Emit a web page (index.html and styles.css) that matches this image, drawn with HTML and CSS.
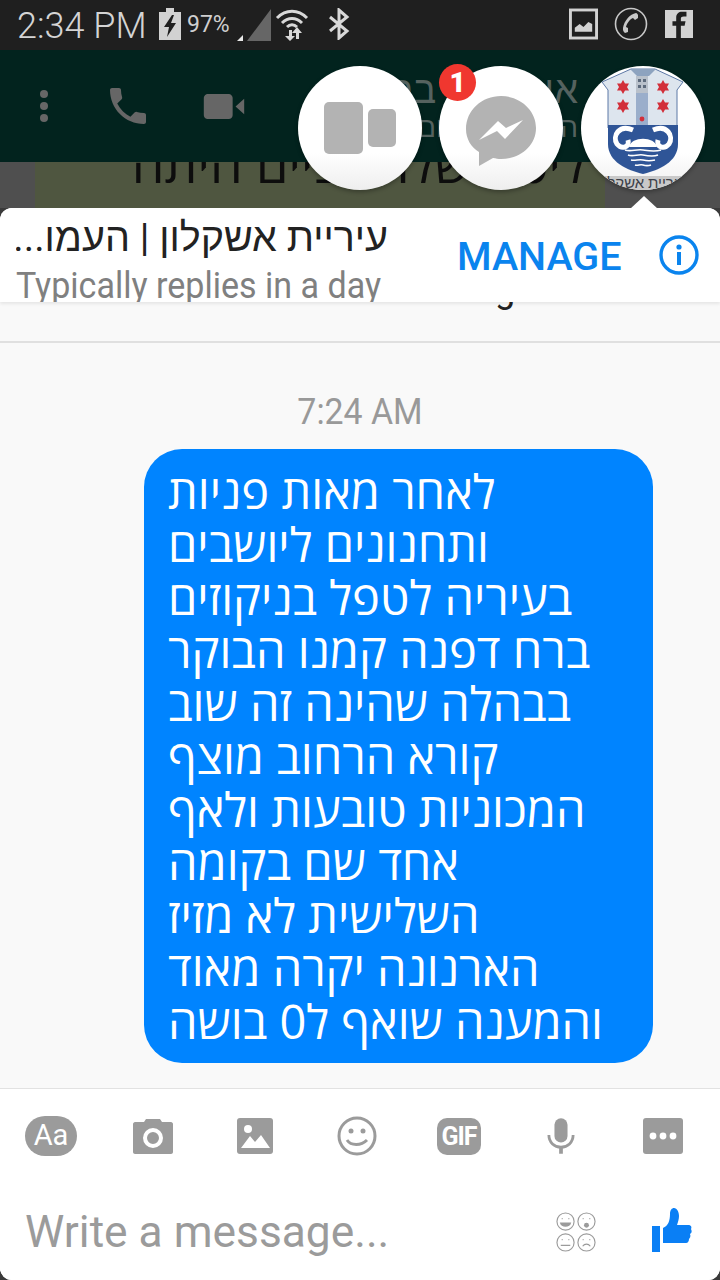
FILE: index.html
```html
<!DOCTYPE html>
<html lang="he">
<head>
    <meta charset="UTF-8">
    <meta name="viewport" content="width=device-width, initial-scale=1.0">
    <title>Messenger</title>
    <link rel="stylesheet" href="styles.css">
</head>
<body>
    <!-- Status bar -->
    <div class="status-bar">
        <div class="status-left">
            <span class="clock">2:34 PM</span>
            <svg class="st-battery" viewBox="0 0 22 32"><path fill="#d2d2d2" d="M0 4h7V0h8v4h7v28H0z"/><path fill="#1f1f1f" d="M13 7 5 19h5l-2 10 9-14h-5l3-8z"/></svg>
            <span class="pct">97%</span>
            <svg class="st-signal" viewBox="0 0 34 34"><path fill="#666" d="M34 1v32H10z"/><path fill="#e8e8e8" d="M0 33l6-6v6z"/></svg>
            <svg class="st-wifi" viewBox="0 0 34 34"><g fill="none" stroke="#d8d8d8" stroke-width="3"><path d="M2 11c9-9 21-9 30 0"/><path d="M7 16c6-6 14-6 20 0"/><path d="M12 20c3-3 7-3 10 0"/></g><path fill="#d8d8d8" d="M14 23h3v6h3l-5 5-5-5h4zM22 20l5 6h-3v6h-3v-6h-4z"/></svg>
            <svg class="st-bt" viewBox="0 0 22 32"><path fill="none" stroke="#d8d8d8" stroke-width="3" d="M2 9l17 14-8 7V2l8 7L2 23"/></svg>
        </div>
        <div class="status-right">
            <svg class="st-pic" viewBox="0 0 30 32"><path fill="#d2d2d2" d="M0 0h30v32H0z"/><path fill="#1f1f1f" d="M3 3h24v26H3z"/><path fill="#d2d2d2" d="M6 24v-4l5-4 4 3 5-5 4 2v8z"/></svg>
            <svg class="st-call" viewBox="0 0 34 34"><circle cx="17" cy="17" r="15.5" fill="none" stroke="#c8c8c8" stroke-width="1.6"/><path fill="#c8c8c8" d="M22 6c-6 1-12 8-13 15-.3 2 .5 4 2 5l3-1 0-4-2-1c1-4 4-8 7-9l2 2 3-2 0-3c-.5-1-1-2-2-2z"/></svg>
            <svg class="st-fb" viewBox="0 0 30 30"><path fill="#d2d2d2" d="M0 0h30v30H0z"/><path fill="#1f1f1f" d="M12 30V17H8v-5h4V8c0-4 3-6 6-6h5v5h-3c-2 0-3 1-3 2v3h5l-1 5h-4v13z"/></svg>
        </div>
    </div>

    <!-- Dimmed app behind the chat heads -->
    <div class="back-app">
        <div class="back-header">
            <svg class="bh-dots" viewBox="0 0 10 34"><circle cx="5" cy="5" r="4"/><circle cx="5" cy="17" r="4"/><circle cx="5" cy="29" r="4"/></svg>
            <svg class="bh-phone" viewBox="3 3 18 18"><path d="M6.62 10.79c1.44 2.83 3.76 5.14 6.59 6.59l2.2-2.2c.27-.27.67-.36 1.02-.24 1.12.37 2.33.57 3.57.57.55 0 1 .45 1 1V20c0 .55-.45 1-1 1-9.39 0-17-7.61-17-17 0-.55.45-1 1-1h3.5c.55 0 1 .45 1 1 0 1.25.2 2.45.57 3.57.11.35.03.74-.25 1.02l-2.2 2.2z"/></svg>
            <svg class="bh-video" viewBox="0 0 42 26"><path d="M4 0h22c2 0 4 2 4 4v18c0 2-2 4-4 4H4c-2 0-4-2-4-4V4c0-2 2-4 4-4zM33 13l9-8v16l-9-8z"/></svg>
            <div class="bh-title" dir="rtl">
                <span class="bh-name">איתי כהן בת</span>
                <span class="bh-sub">הודעות מהיום 2</span>
            </div>
        </div>
        <div class="back-body">
            <div class="back-card">ליס השלה בניים היתה</div>
        </div>
    </div>

    <!-- Messenger panel -->
    <div class="panel">
        <div class="panel-head">
            <div class="page-info">
                <div class="page-name" dir="rtl">עיריית אשקלון | העמו...</div>
                <div class="page-status">Typically replies in a day</div>
            </div>
            <span class="manage">MANAGE</span>
            <svg class="info-icon" viewBox="0 0 40 40"><circle cx="20" cy="20" r="18" fill="none" stroke="#0a84ee" stroke-width="3.4"/><circle cx="20" cy="12" r="2.6" fill="#0a84ee"/><path fill="#0a84ee" d="M18 17h4v13h-4z"/></svg>
        </div>
        <div class="thread">
            <div class="prev-msg"><span class="prev-tail">g</span></div>
            <div class="time-label">7:24 AM</div>
            <div class="bubble">לאחר מאות פניות<br>ותחנונים ליושבים<br>בעיריה לטפל בניקוזים<br>ברח דפנה קמנו הבוקר<br>בבהלה שהינה זה שוב<br>קורא הרחוב מוצף<br>המכוניות טובעות ולאף<br>אחד שם בקומה<br>השלישית לא מזיז<br>הארנונה יקרה מאוד<br>והמענה שואף ל0 בושה</div>
        </div>
        <div class="composer">
            <div class="tool-row">
                <span class="aa">Aa</span>
                <svg class="tool t-camera" viewBox="0 0 40 36"><path fill="#9b9b9b" d="M2 4h9l2-3h14l2 3h9c1 0 2 1 2 2v28c0 1-1 2-2 2H2c-1 0-2-1-2-2V6c0-1 1-2 2-2z"/><circle cx="20" cy="20" r="8" fill="none" stroke="#fff" stroke-width="4"/></svg>
                <svg class="tool t-image" viewBox="0 0 36 36"><rect width="36" height="36" rx="3" fill="#9b9b9b"/><circle cx="11" cy="11" r="4" fill="#fff"/><path fill="#fff" d="M4 30l9-12 5 6 6-7 9 13z"/></svg>
                <svg class="tool t-smile" viewBox="0 0 40 40"><circle cx="20" cy="20" r="18" fill="none" stroke="#9b9b9b" stroke-width="3"/><circle cx="14" cy="15" r="2.5" fill="#9b9b9b"/><circle cx="26" cy="15" r="2.5" fill="#9b9b9b"/><path fill="none" stroke="#9b9b9b" stroke-width="3" d="M10 24c4 6 14 6 20 0"/></svg>
                <span class="gif">GIF</span>
                <svg class="tool t-mic" viewBox="0 0 30 38"><rect x="8" y="0" width="14" height="26" rx="7" fill="#9b9b9b"/><path fill="none" stroke="#9b9b9b" stroke-width="3" d="M2 18c0 8 6 13 13 13s13-5 13-13"/><path fill="#9b9b9b" d="M13 30h4v8h-4z"/></svg>
                <svg class="tool t-more" viewBox="0 0 40 36"><rect width="40" height="36" rx="3" fill="#9b9b9b"/><circle cx="10" cy="18" r="3.4" fill="#fff"/><circle cx="20" cy="18" r="3.4" fill="#fff"/><circle cx="30" cy="18" r="3.4" fill="#fff"/></svg>
            </div>
            <div class="input-row">
                <span class="placeholder">Write a message...</span>
                <svg class="faces" viewBox="0 0 42 42"><g fill="none" stroke="#9b9b9b" stroke-width="1.2"><circle cx="10" cy="10" r="9"/><circle cx="32" cy="10" r="9"/><circle cx="10" cy="32" r="9"/><circle cx="32" cy="32" r="9"/><path d="M6 29h1M13 29h1M5 35h10M28 29h1M35 29h1M28 36c2-3 6-3 8 0M6 7h1M13 7h1M28 7h1M35 7h1"/></g><path fill="#9b9b9b" d="M4 11h12c-1 6-11 6-12 0z"/><circle cx="32" cy="14" r="2.6" fill="#9b9b9b"/></svg>
                <svg class="like" viewBox="0 0 40 44"><path fill="#0a7ff5" d="M0 18h8v26H0zM11 20c5-2 7-7 7-14 0-4 2-6 4-6 3 0 5 4 5 8 0 3-1 6-2 9h11c3 0 4 2 3 4 1 2 1 4-1 5 1 2 0 4-1 5 0 2-1 4-3 4H11z"/></svg>
            </div>
        </div>
    </div>

    <!-- Chat heads float over everything -->
    <div class="head head-split">
        <span class="split-a"></span><span class="split-b"></span>
    </div>
    <div class="head head-msg">
        <svg class="msg-icon" viewBox="0 0 70 70"><path fill="#b3b3b3" d="M35 0C16 0 0 14 0 33c0 10 5 18 13 23v14l14-8c3 .5 5 1 8 1 19 0 35-13 35-31S54 0 35 0z"/><path fill="#fff" d="M13 44 32 25l8 7 17-8-18 19-8-8z"/></svg>
        <span class="badge">1</span>
    </div>
    <div class="head head-logo">
        <svg class="crest" viewBox="0 0 124 124">
            <path fill="#dde5ee" stroke="#5d78a6" stroke-width="1" d="M21 16 50 3h24l28 13-6 8v38H27V24z"/>
            <path fill="#8da3bf" d="M49 3h26l-7 7H56z"/>
            <path fill="#b9c1cb" d="M55 10h12v17H55z"/>
            <path fill="#5d6b7d" d="M57 13h3v3h-3zM62 13h3v3h-3zM57 19h3v3h-3zM62 19h3v3h-3z"/>
            <path fill="#9aaecb" d="M55 27h12v34H55z"/>
            <path fill="#2f5597" d="M27 59h70v19c0 18-19 26-35 30-16-4-35-12-35-30z"/>
            <path fill="none" stroke="#fff" stroke-width="5" d="M52 64C38 58 31 70 36 78c5 6 13 3 11-4M72 64c14-6 21 6 16 14-5 6-13 3-11-4"/>
            <path fill="#fff" d="M48 81c2-11 26-11 28 0z"/>
            <path fill="none" stroke="#fff" stroke-width="1.6" d="M44 84c6 2 11-1 18 0s12 2 18 0M47 89c5 2 10-1 15 0s10 2 15 0M50 94c4 1 8-1 12 0s8 1 12 0M54 99c3 1 5-1 8 0s5 1 8 0"/>
            <g fill="#d22f3a">
                <path d="M42 14l6 10.500H36zM42 28l-6-10.500h12z"/>
                <path d="M82 14l6 10.500H76zM82 28l-6-10.500h12z"/>
                <path d="M42 33l6 10.500H36zM42 47l-6-10.500h12z"/>
                <path d="M82 33l6 10.500H76zM82 47l-6-10.500h12z"/>
                <circle cx="61" cy="53" r="2.400"/>
            </g>
        </svg>
        <span class="crest-label">עיריית אשקלון</span>
    </div>
    <div class="head-pointer"></div>
</body>
</html>
```

FILE: styles.css
```css
* {
    margin: 0;
    padding: 0;
    box-sizing: border-box;
    font-family: Roboto, "Liberation Sans", sans-serif;
}

html, body {
    width: 720px;
    height: 1280px;
    overflow: hidden;
}

body {
    position: relative;
    display: flex;
    flex-direction: column;
    background: #3a3a3a;
}

/* Status bar */
.status-bar {
    height: 50px;
    flex: none;
    display: flex;
    align-items: center;
    justify-content: space-between;
    padding: 0 27px 2px 17px;
    background: #1f1f1f;
}

.status-left, .status-right {
    display: flex;
    align-items: center;
}

.clock {
    font-size: 36px;
    font-weight: 300;
    color: #d4d4d4;
    width: 142px;
    margin-top: 3px;
    white-space: nowrap;
}

.st-battery { width: 22px; height: 32px; }
.pct { font-size: 23px; color: #cfcfcf; margin-left: 6px; width: 48px; }
.st-signal { width: 34px; height: 34px; margin-left: 2px; margin-top: 2px; }
.st-wifi { width: 34px; height: 34px; margin-left: 4px; }
.st-bt { width: 22px; height: 32px; margin-left: 19px; }

.st-pic { width: 29px; height: 32px; }
.st-call { width: 34px; height: 34px; margin-left: 16px; }
.st-fb { width: 28px; height: 30px; margin-left: 17px; }

/* App dimmed behind */
.back-app {
    height: 158px;
    flex: none;
    display: flex;
    flex-direction: column;
}

.back-header {
    height: 112px;
    flex: none;
    position: relative;
    display: flex;
    align-items: center;
    background: #02231e;
    padding-left: 39px;
    z-index: 1;
}

.back-header svg { fill: #666; flex: none; }
.bh-dots { width: 10px; height: 34px; }
.bh-phone { width: 36px; height: 36px; margin-left: 61px; }
.bh-video { width: 42px; height: 25px; margin-left: 57px; }

.bh-title {
    margin-left: auto;
    padding-right: 142px;
    display: flex;
    flex-direction: column;
    color: #55625f;
    white-space: nowrap;
}

.bh-name { font-size: 38px; line-height: 44px; }
.bh-sub { font-size: 28px; line-height: 32px; }

.back-body {
    flex: 1;
    background: #4f4f4f;
    padding-left: 35px;
    overflow: hidden;
}

.back-card {
    width: 570px;
    height: 46px;
    background: #4f5640;
    text-align: center;
    font-family: "Open Sans", "Liberation Sans", sans-serif;
    font-size: 52px;
    line-height: 2px;
    color: #0d0d0d;
    overflow: hidden;
    padding-left: 78px;
    white-space: nowrap;
}

/* Panel */
.panel {
    flex: 1;
    display: flex;
    flex-direction: column;
    background: #fff;
    border-radius: 12px;
    overflow: hidden;
}

.panel-head {
    height: 94px;
    flex: none;
    display: flex;
    align-items: center;
    padding: 0 21px 0 16px;
    background: #fff;
    position: relative;
    z-index: 1;
    box-shadow: 0 2px 3px rgba(0,0,0,0.08);
}

.page-info {
    width: 441px;
    height: 94px;
    flex: none;
    overflow: hidden;
}

.page-name {
    font-size: 39.5px;
    line-height: 42px;
    margin-top: 9px;
    color: #222;
    white-space: nowrap;
    width: 372px;
    text-align: left;
}

.page-status {
    font-size: 37px;
    line-height: 38px;
    color: #808080;
    margin-top: 8px;
    transform: scaleX(0.92);
    transform-origin: left;
    white-space: nowrap;
}

.manage {
    font-size: 39.5px;
    font-weight: 500;
    color: #0a84ee;
    margin-top: 3px;
}

.info-icon {
    width: 40px;
    height: 40px;
    margin-left: auto;
}

.thread {
    flex: 1;
    background: #f9f9f9;
    display: flex;
    flex-direction: column;
}

.prev-msg {
    height: 41px;
    flex: none;
    border-bottom: 2px solid #e0e0e0;
    position: relative;
    overflow: hidden;
}

.prev-tail {
    position: absolute;
    left: 495px;
    top: -17px;
    font-size: 36px;
    line-height: 10px;
    color: #222;
}

.time-label {
    text-align: center;
    font-size: 36px;
    line-height: 38px;
    color: #999;
    margin-top: 50px;
    transform: scaleX(0.94);
}

.bubble {
    width: 509px;
    margin: 18px 0 0 144px;
    padding: 16px 24px 0;
    height: 614px;
    border-radius: 38px;
    background: #0084ff;
    color: #fff;
    font-family: "Open Sans", "Liberation Sans", sans-serif;
    font-size: 47px;
    line-height: 53px;
    white-space: nowrap;
}

/* Composer */
.composer {
    height: 192px;
    flex: none;
    background: #fff;
    border-top: 1px solid #e2e2e2;
    position: relative;
}

.tool-row {
    height: 94px;
    display: flex;
    align-items: center;
    padding-left: 25px;
}

.tool { flex: none; }
.t-camera { width: 40px; height: 36px; margin-left: 56px; }
.t-image { width: 36px; height: 36px; margin-left: 64px; }
.t-smile { width: 40px; height: 40px; margin-left: 64px; }
.t-mic { width: 28px; height: 38px; margin-left: 66px; }
.t-more { width: 40px; height: 36px; margin-left: 68px; }

.aa {
    width: 52px;
    height: 40px;
    border-radius: 20px;
    background: #9b9b9b;
    color: #fff;
    font-size: 29px;
    line-height: 39px;
    text-align: center;
}

.gif {
    width: 44px;
    height: 37px;
    margin-left: 60px;
    border-radius: 10px;
    background: #9b9b9b;
    color: #fff;
    font-size: 25px;
    font-weight: 700;
    line-height: 37px;
    letter-spacing: -1px;
    text-align: center;
}

.input-row {
    display: flex;
    align-items: center;
    padding: 0 28px 0 25px;
    height: 98px;
}

.placeholder {
    font-size: 44.3px;
    color: #9b9b9b;
    flex: 1;
}

.faces { width: 40px; height: 40px; }
.like { width: 40px; height: 44px; margin: -4px 0 0 56px; }

/* Chat heads */
.head {
    position: absolute;
    top: 66px;
    width: 124px;
    height: 124px;
    border-radius: 50%;
    background: linear-gradient(#fff 70%, #eee);
    box-shadow: 0 2px 4px rgba(0,0,0,0.3);
    display: flex;
    align-items: center;
    justify-content: center;
    z-index: 5;
}

.head-split { left: 298px; gap: 5px; }
.split-a { width: 39px; height: 52px; background: #b3b3b3; border-radius: 5px; }
.split-b { width: 28px; height: 38px; background: #b3b3b3; border-radius: 5px; }

.head-msg { left: 439px; }
.msg-icon { width: 70px; height: 70px; margin-top: 6px; }

.badge {
    position: absolute;
    left: 0;
    top: -2px;
    width: 37px;
    height: 37px;
    border-radius: 50%;
    background: #f0372f;
    color: #fff;
    font-size: 28px;
    font-weight: 900;
    line-height: 37px;
    text-align: center;
}

.head-logo {
    left: 581px;
    overflow: hidden;
    align-items: flex-start;
}

.crest { width: 124px; height: 124px; }

.crest-label {
    position: absolute;
    left: 0;
    right: 0;
    bottom: 0;
    height: 14px;
    text-align: center;
    font-size: 15px;
    font-weight: 500;
    line-height: 14px;
    color: #3c4048;
    background: #c9c9c9;
    white-space: nowrap;
    overflow: hidden;
}

.head-pointer {
    position: absolute;
    left: 630px;
    top: 196px;
    width: 0;
    height: 0;
    border-left: 14px solid transparent;
    border-right: 14px solid transparent;
    border-bottom: 13px solid #fff;
    z-index: 4;
}
```
